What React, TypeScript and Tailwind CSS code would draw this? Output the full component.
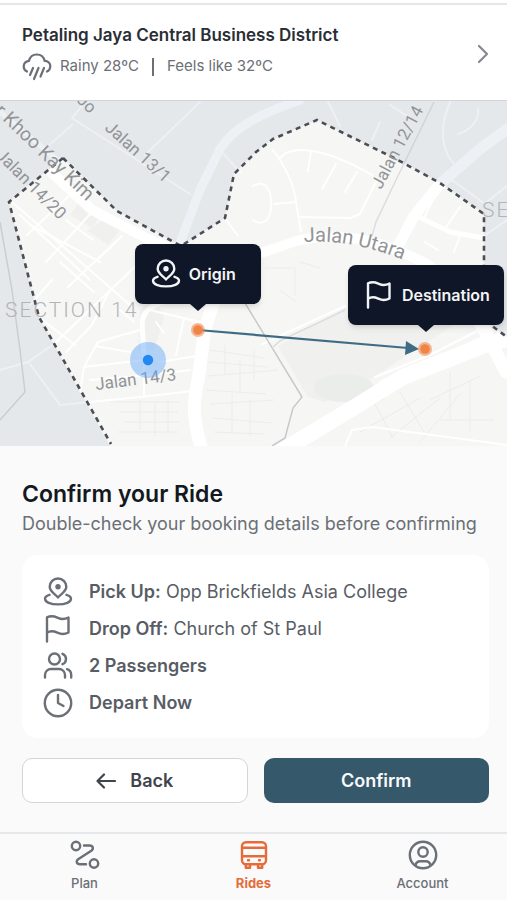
import type { ReactNode } from 'react';

interface IconProps {
  className?: string;
}

function Icon({ className = '', children }: IconProps & { children: ReactNode }) {
  return (
    <svg
      viewBox="0 0 34 34"
      className={`size-[34px] shrink-0 ${className}`}
      fill="none"
      stroke="currentColor"
      strokeWidth="2.4"
      strokeLinecap="round"
      strokeLinejoin="round"
      aria-hidden="true"
    >
      {children}
    </svg>
  );
}

function PinIcon({ className }: IconProps) {
  return (
    <Icon className={className}>
      <path d="M17 22.5C15.5 19.8 8.7 17 8.7 11.8a8.3 8.3 0 0 1 16.6 0C25.3 17 18.5 19.8 17 22.5Z" />
      <circle cx="17" cy="11.8" r="1.5" fill="currentColor" />
      <path d="M8.5 19.8C5.5 20.7 4 22 4 23.7C4 27 9.5 29.4 17 29.4S30 27 30 23.7C30 22 28.5 20.7 25.5 19.8" />
    </Icon>
  );
}

function FlagIcon({ className }: IconProps) {
  return (
    <Icon className={className}>
      <path d="M6 29.5V5.300C7.500 4.500 9 4.200 11 4.200C15.300 4.200 17.300 7 21.700 7C24.200 7 26 6.300 27.500 5.500V20.500C26 21.300 24.200 22 21.700 22C17.300 22 15.300 19.300 11 19.300C9 19.300 7.500 19.700 6 20.700" />
    </Icon>
  );
}

function UsersIcon({ className }: IconProps) {
  return (
    <Icon className={className}>
      <circle cx="13.5" cy="10" r="5.5" />
      <path d="M4 28.5V26a6 6 0 0 1 6-6h8a6 6 0 0 1 6 6v2.5" />
      <path d="M21.5 4.8a5.600 5.600 0 0 1 0 10.400M26 20.200a6 6 0 0 1 4.200 5.800v2.500" />
    </Icon>
  );
}

function ClockIcon({ className }: IconProps) {
  return (
    <Icon className={className}>
      <circle cx="17" cy="17" r="13.2" />
      <path d="M17 9v8l5.500 3" />
    </Icon>
  );
}

function RouteIcon() {
  return (
    <Icon>
      <circle cx="8" cy="8" r="4.200" />
      <circle cx="26" cy="25.500" r="4.200" />
      <path d="M16 7.500h5.500c3.500 0 4.500 3.200 1.800 5.200L10.500 21C7.600 23 8.500 26.300 12 26.300h6" />
    </Icon>
  );
}

function BusIcon() {
  return (
    <Icon>
      <rect x="5" y="4.200" width="24" height="22" rx="4" />
      <path d="M5.500 9.800h23M5.500 18.200h23M11 22.300h1M22 22.300h1" />
      <path d="M8.800 26.500v3.300h4.200v-3.300M21 26.500v3.300h4.200v-3.300" />
    </Icon>
  );
}

function AccountIcon() {
  return (
    <Icon>
      <circle cx="17" cy="17" r="13.2" />
      <circle cx="17" cy="14" r="4.7" />
      <path d="M9.500 27c.8-2.700 2.300-3.800 4.500-3.800h6c2.200 0 3.700 1.100 4.500 3.800" />
    </Icon>
  );
}

function RainIcon() {
  return (
    <svg
      viewBox="0 0 30 30"
      className="size-[30px] shrink-0"
      fill="none"
      stroke="currentColor"
      strokeWidth="2.2"
      strokeLinecap="round"
      aria-hidden="true"
    >
      <path d="M5 19.500C2.800 18.400 1.700 16.700 1.700 14.400C1.700 11.500 3.800 9.300 7 8.800C8 5 11 2.500 14.800 2.500S21.700 5 22.600 8.800C26.200 9 28.300 11.400 28.300 14.300C28.300 16.700 27.200 18.500 25 19.500" />
      <path d="M11 16l-3 7M16.500 16l-4.500 11M22 16l-3.500 8.500" />
    </svg>
  );
}

const BOUNDARY =
  'M9 202L63 158L117 211L181 246L225 218L234 174L256 152L273 139L317 120L396 159L440 183L484 214V320L507 337V446H110L39 317Z';

function RideMap() {
  return (
    <svg
      viewBox="0 101 507 345"
      className="block h-auto w-full"
      role="img"
      aria-label="Map of the route from origin to destination"
    >
      <rect y="100" width="507" height="346" fill="#f6f6f4" />
      <g fill="#f0f1ef">
        <path d="M278 346L345 308H480L375 376L325 402L308 397Z" />
        <path d="M140 312C145 300 160 300 164 318L154 350H138Z" />
        <path d="M82 199l21 12l-11 17l-22-13zM105 218l17 9l-14 18l-20-14z" />
      </g>
      <ellipse cx="344" cy="388" rx="30" ry="14" fill="#ebedeb" />

      <g fill="none" stroke="#ececec" strokeWidth="1">
        <path d="M210 350l55 8M208 362l60 5M208 376l70-6M206 390l60 4M210 404l64-4M212 418l60 5M214 432l50 2M225 345v30M240 360v34M254 350v30M232 394v40M250 400v36" />
        <path d="M345 420l40-22M360 432l60-34M390 438l50-40M420 442l40-48M430 400l50-24M440 420h54M450 372v48M470 380v52M400 392l24 40M375 404l18 34" />
        <path d="M110 402h70M120 412h58M125 422h55M118 432h60M140 400v30M155 402v34M168 400v34" />
        <path d="M265 268h30v28M300 262l20 6M280 290l16 12" />
      </g>

      <g fill="none" stroke="#fff" strokeLinecap="round" strokeLinejoin="round">
        <g strokeWidth="2">
          <path d="M72 125L40 153M85 102L72 118L190 194M200 102L145 155M220 150L240 172" />
          <path d="M12 202L130 305M27 235L75 190M30 225L100 262M46 262L92 212M68 287L122 236M20 215L90 280M95 262L118 240M60 262L94 292M93 240L66 220" />
          <path d="M0 370L28 362L54 344L100 300L140 262M30 364L60 405L140 397L192 391M52 280L30 305M40 318L75 345M80 392L84 367L145 360M84 367L98 342L140 330M110 290L92 325L66 352" />
          <path d="M95 346L130 352M120 310L134 322M144 360V397M90 380L140 376L190 370M176 355L184 318L205 325M150 310L200 322M156 322L164 333M196 356L160 362" />
          <path d="M273 150C285 166 294 184 296 202L301 232M280 158C290 146 320 145 372 175M311 151L308 171M336 164L322 189M357 172L345 192M376 182L360 214L350 218L300 217M296 202L274 204M253 186C262 180 271 186 271 202C272 222 262 226 253 220" />
          <path d="M225 218L238 236M460 207L444 230M438 250L425 242M454 252L460 236M425 216L438 190" />
          <path d="M340 126L328 102M380 122L372 140M390 105L410 118M450 102C438 130 442 152 456 166M478 108C480 124 465 132 458 134M452 180L485 204M484 204L507 186M484 236L507 220" />
          <path d="M262 344L345 306M375 377L430 355L483 328M380 382L440 356L490 334M345 446L352 430L372 427L507 445" />
        </g>
        <g strokeWidth="5">
          <path d="M417 216L450 232L484 238M144 356L142 325C142 312 150 306 166 301" />
        </g>
        <path d="M0 112L60 162" strokeWidth="5" />
        <path d="M52 173L92 210L150 240L200 260C240 266 265 250 300 240C350 230 390 244 430 266" strokeWidth="10" />
        <path d="M178 248L200 190L220 149C232 130 254 116 300 100" strokeWidth="9" />
        <path d="M396 250L414 216L440 184L480 149L510 127" strokeWidth="11" />
        <path d="M218 290L205 328L198 380C192 405 194 425 202 450" strokeWidth="13" />
        <path d="M275 455L353 408L403 377L485 345L510 338" strokeWidth="16" />
        <path d="M478 318L506 372" strokeWidth="13" />
      </g>

      <g fill="none" stroke="#c6c9cc" strokeWidth="1.5">
        <path d="M245 303L302 397L293 408L285 438L272 446" />
        <path d="M272 348L280 341L345 310M434 102L396 180L376 222L372 236" stroke="#dcddde" />
        <path d="M0 222L12 290L20 350L25 392L0 420" stroke="#d4d6d9" />
      </g>

      <path
        d={`M0 100H507V446H0Z ${BOUNDARY}`}
        fill="#96a6bc"
        fillOpacity="0.17"
        fillRule="evenodd"
      />
      <g fill="none" stroke="#4b4e54" strokeWidth="2.6" strokeDasharray="5 4.500">
        <path d="M63 158L9 202L39 317L111 444" />
        <path d="M63 158L117 211L181 246L225 218L234 174L256 152L273 139L317 120L396 159L440 183L484 214V320L507 337" />
      </g>

      <g className="font-['Roboto','Liberation_Sans',sans-serif]" fill="#929497" fontSize="17">
        <text transform="translate(-6 112) rotate(44)" fontSize="19">r Khoo Kay Kim</text>
        <text transform="translate(-5 156) rotate(45)">Jalan 14/20</text>
        <text transform="translate(104 129) rotate(42)">Jalan 13/1</text>
        <text transform="translate(381 190) rotate(-62)">Jalan 12/14</text>
        <text transform="translate(96 390) rotate(-7)">Jalan 14/3</text>
        <path id="utara" d="M304 242Q355 238 415 265" fill="none" />
        <text fontSize="20">
          <textPath href="#utara">Jalan Utara</textPath>
        </text>
        <g fill="#b2b4b7" fontSize="21" fontWeight="300" letterSpacing="2">
          <text x="5" y="317">SECTION 14</text>
          <text x="482" y="217">SECTION</text>
        </g>
        <text transform="translate(76 101) rotate(44)">Jo</text>
      </g>

      <circle cx="148" cy="360" r="18" fill="#60a5fa" fillOpacity="0.45" />
      <circle cx="148" cy="360" r="5.2" fill="#2388f2" />

      <path d="M198 330L408 348" stroke="#3f6c84" strokeWidth="2.2" />
      <path d="M406 341L419 349L405 355Z" fill="#3f6c84" />
      <g fill="#f08445">
        <circle cx="198" cy="330" r="7" fillOpacity="0.55" />
        <circle cx="198" cy="330" r="4.8" />
        <circle cx="425" cy="349" r="7" fillOpacity="0.55" />
        <circle cx="425" cy="349" r="4.8" />
      </g>
    </svg>
  );
}

function MapTooltip({ label, icon, className }: { label: string; icon: ReactNode; className: string }) {
  return (
    <div className={`absolute flex -translate-x-1/2 -translate-y-full flex-col items-center ${className}`}>
      <div className="flex h-[60px] min-w-[126px] items-center gap-[6px] rounded-lg bg-[#0f1627] px-[14px] text-base font-semibold text-gray-100 shadow-md">
        {icon}
        {label}
      </div>
      <svg viewBox="0 0 16 7" className="h-[7px] w-4" aria-hidden="true">
        <path d="M0 0H16L8 7Z" fill="#0f1627" />
      </svg>
    </div>
  );
}

const details = [
  { icon: <PinIcon />, label: 'Pick Up:', value: 'Opp Brickfields Asia College' },
  { icon: <FlagIcon />, label: 'Drop Off:', value: 'Church of St Paul' },
  { icon: <UsersIcon />, label: '2 Passengers', value: '' },
  { icon: <ClockIcon />, label: 'Depart Now', value: '' },
];

const tabs = [
  { name: 'Plan', icon: <RouteIcon />, active: false },
  { name: 'Rides', icon: <BusIcon />, active: true },
  { name: 'Account', icon: <AccountIcon />, active: false },
];

export default function App() {
  return (
    <div className="flex min-h-screen flex-col bg-[#fafafa] font-['Inter','Liberation_Sans',sans-serif] text-[#585d65]">
      <header className="border-b border-gray-300 bg-white">
        <div className="h-[5px] border-b-2 border-gray-200" />
        <a href="#area" className="flex items-center justify-between pt-[18px] pr-[18px] pb-4 pl-[22px]">
          <div className="flex flex-col gap-[2px]">
            <h2 className="text-[17px] leading-6 font-semibold text-[#2a2e35]">
              Petaling Jaya Central Business District
            </h2>
            <div className="flex h-[35px] items-center gap-2 text-[15px] text-[#6b6f76]">
              <RainIcon />
              <span>Rainy 28ºC</span>
              <span className="mx-[5px] h-[18px] w-[2px] bg-[#6b6f76]" />
              <span>Feels like 32ºC</span>
            </div>
          </div>
          <svg
            viewBox="0 0 12 20"
            className="h-5 w-3"
            fill="none"
            stroke="#85888d"
            strokeWidth="2.2"
            strokeLinecap="round"
            strokeLinejoin="round"
            aria-hidden="true"
          >
            <path d="M2 2l8 8l-8 8" />
          </svg>
        </a>
      </header>

      <section className="relative overflow-hidden">
        <RideMap />
        <MapTooltip label="Origin" icon={<PinIcon />} className="top-[61%] left-[39%]" />
        <MapTooltip label="Destination" icon={<FlagIcon />} className="top-[67%] left-[84%]" />
      </section>

      <main className="flex-1 pt-[33px] pr-[18px] pb-[29px] pl-[22px]">
        <h1 className="text-[23px] leading-[31px] font-semibold text-[#14181f]">Confirm your Ride</h1>
        <p className="text-lg leading-7 text-[#6b6f76]">Double-check your booking details before confirming</p>

        <ul className="mt-[17px] flex flex-col gap-[3px] rounded-2xl bg-white pt-5 pr-4 pb-[18px] pl-[19px] text-lg">
          {details.map((item) => (
            <li key={item.label} className="flex items-center gap-[14px]">
              <span className="text-[#6b6f76]">{item.icon}</span>
              <span>
                <strong className="font-semibold">{item.label}</strong> {item.value}
              </span>
            </li>
          ))}
        </ul>

        <div className="mt-5 grid grid-cols-2 gap-4 text-lg font-semibold">
          <button
            type="button"
            className="flex h-[45px] items-center justify-center gap-[14px] rounded-[10px] border border-gray-300 bg-white text-[#3f444d]"
          >
            <svg
              viewBox="0 0 20 16"
              className="h-4 w-5"
              fill="none"
              stroke="currentColor"
              strokeWidth="2.2"
              strokeLinecap="round"
              strokeLinejoin="round"
              aria-hidden="true"
            >
              <path d="M19 8H1.500M8 1.500L1.500 8L8 14.500" />
            </svg>
            Back
          </button>
          <button type="button" className="h-[45px] rounded-[10px] bg-[#36586b] text-gray-50">
            Confirm
          </button>
        </div>
      </main>

      <nav className="grid grid-cols-3 border-t-2 border-gray-200 pt-1 pb-2 text-[13px] leading-[18px] font-medium">
        {tabs.map((tab) => (
          <a
            key={tab.name}
            href={`#${tab.name.toLowerCase()}`}
            aria-current={tab.active ? 'page' : undefined}
            className={`flex flex-col items-center gap-[2px] ${tab.active ? 'font-bold text-[#e56c3a]' : 'text-[#6b6f76]'}`}
          >
            {tab.icon}
            {tab.name}
          </a>
        ))}
      </nav>
    </div>
  );
}
